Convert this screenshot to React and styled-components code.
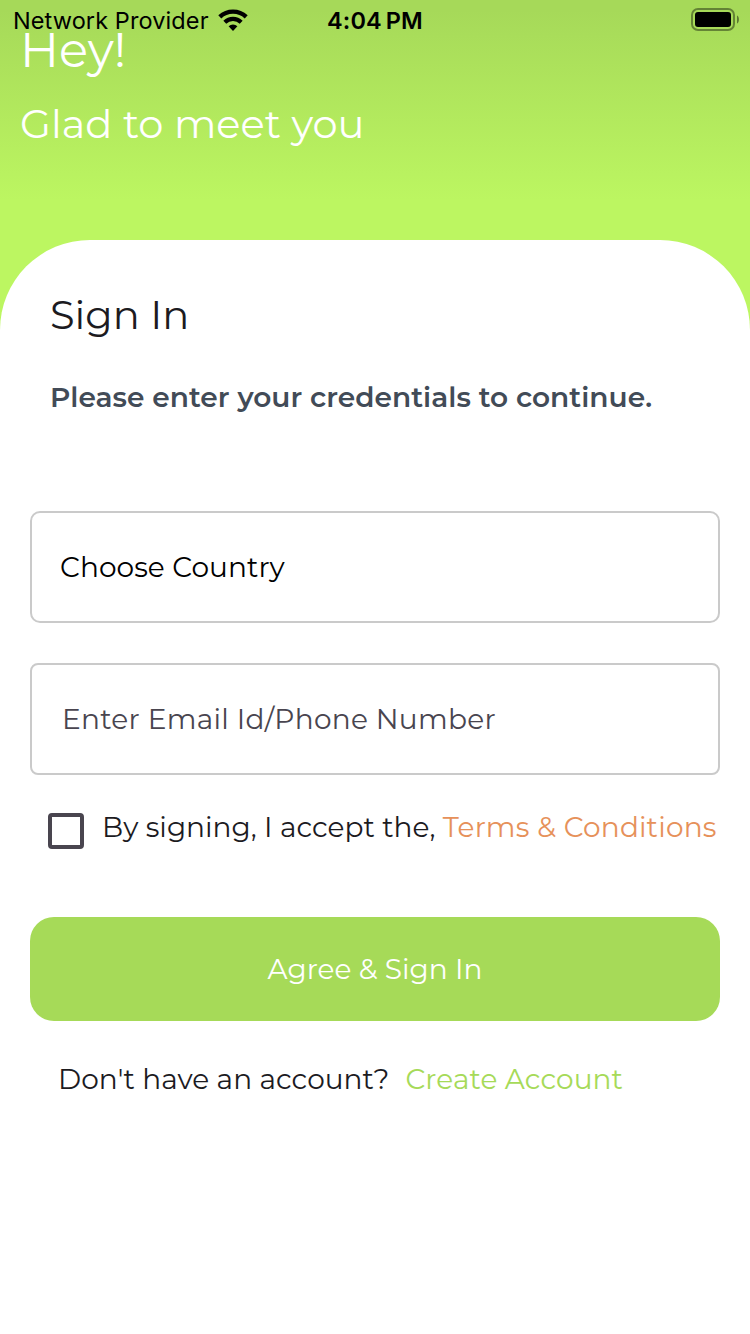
import React from "react";
import styled, { createGlobalStyle } from "styled-components";

const Global = createGlobalStyle`
  * { box-sizing: border-box; }
  body { margin: 0; background: #fff; font-family: Montserrat, Inter, "Liberation Sans", sans-serif; }
`;

const Screen = styled.main`
  width: 750px;
  height: 1334px;
  overflow: hidden;
  display: flex;
  flex-direction: column;
  background: linear-gradient(#a6d959 0, #a6d959 10px, #bcf661 200px);
`;

const StatusBar = styled.header`
  display: grid;
  grid-template-columns: minmax(0, 1fr) auto minmax(0, 1fr);
  align-items: center;
  height: 31px;
  padding: 8px 10px 0;
  line-height: 23px;
`;

const Carrier = styled.div`
  display: flex;
  align-items: center;
  gap: 9px;
  padding-left: 3px;
`;

const Label = styled.span`
  display: block;
  font-size: ${(p) => p.$size || 28}px;
  font-weight: ${(p) => p.$weight || 400};
  letter-spacing: ${(p) => p.$track || 0}px;
  color: ${(p) => p.$color || "#1c1b1f"};
  white-space: pre;
`;

const StatusText = styled(Label)`
  font-family: Inter, sans-serif;
  color: #000;
  margin-top: 1px;
  word-spacing: ${(p) => p.$word || 0}px;
`;

const BatterySlot = styled.div`
  display: flex;
  justify-content: flex-end;
  padding-bottom: 1px;
`;

const Greeting = styled.section`
  display: flex;
  flex-direction: column;
  height: 209px;
  padding-left: 20px;
`;

const HeyLine = styled.div`
  line-height: 38px;
`;

const GladLine = styled.div`
  margin-top: 30px;
  line-height: 50px;
`;

const Sheet = styled.section`
  flex: 1;
  background: #fff;
  border-radius: 90px 90px 0 0;
  padding: 50px 30px 0;
`;

const Title = styled.div`
  line-height: 50px;
  padding-left: 20px;
`;

const Subtitle = styled.div`
  margin-top: 37px;
  line-height: 40px;
  padding-left: 20px;
`;

const Field = styled.div`
  display: flex;
  align-items: center;
  height: 112px;
  margin-top: ${(p) => p.$top}px;
  padding-left: ${(p) => p.$inset}px;
  border: 2px solid #cacaca;
  border-radius: ${(p) => p.$radius}px;
`;

const Terms = styled.div`
  display: flex;
  align-items: flex-start;
  margin-top: 32px;
  padding-left: 18px;
  line-height: 40px;
`;

const Checkbox = styled.div`
  width: 36px;
  height: 36px;
  margin: 6px 18px 0 0;
  border: 4px solid #49454f;
  border-radius: 4px;
`;

const Button = styled.div`
  display: flex;
  align-items: center;
  justify-content: center;
  height: 104px;
  margin-top: 68px;
  border-radius: 24px;
  background: #a6da58;
`;

const SignUp = styled.div`
  display: flex;
  margin-top: 38px;
  padding-left: 28px;
  line-height: 40px;
  gap: 16px;
`;

const Wifi = () => (
  <svg width="30" height="22" viewBox="0 0 30 22" fill="none" stroke="#000">
    <path d="M1.8 7.8A19.4 19.4 0 0 1 28.2 7.8" strokeWidth="4.4" />
    <path d="M6.8 13.2A12 12 0 0 1 23.2 13.2" strokeWidth="4.2" />
    <path d="M15 22L10.6 17.25A6.5 6.5 0 0 1 19.4 17.25Z" fill="#000" stroke="none" />
  </svg>
);

const Battery = () => (
  <svg width="49" height="23" viewBox="0 0 49 23">
    <rect x="1" y="1" width="42" height="21" rx="6" fill="none" stroke="#000" strokeOpacity="0.4" strokeWidth="2" />
    <rect x="4" y="4" width="36" height="15" rx="3" fill="#000" />
    <path d="M46 7.5C48.6 8.6 48.6 14.4 46 15.5Z" fill="#000" fillOpacity="0.45" />
  </svg>
);

export default function App() {
  return (
    <>
      <Global />
      <Screen>
        <StatusBar>
          <Carrier>
            <StatusText $size={23.5} $track={0.1}>Network Provider</StatusText>
            <Wifi />
          </Carrier>
          <StatusText $size={23.5} $weight={600} $word={-2} $track={0.1}>4:04 PM</StatusText>
          <BatterySlot><Battery /></BatterySlot>
        </StatusBar>
        <Greeting>
          <HeyLine><Label $size={48} $color="#fff">Hey!</Label></HeyLine>
          <GladLine><Label $size={40} $color="#fff">Glad to meet you</Label></GladLine>
        </Greeting>
        <Sheet>
          <Title><Label $size={40}>Sign In</Label></Title>
          <Subtitle><Label $weight={600} $track={0.04} $color="#424b57">Please enter your credentials to continue.</Label></Subtitle>
          <Field $top={94} $inset={28} $radius={10}><Label $track={0.06} $color="#000">Choose Country</Label></Field>
          <Field $top={40} $inset={30} $radius={8}><Label $track={0.28} $color="#49454f">Enter Email Id/Phone Number</Label></Field>
          <Terms>
            <Checkbox />
            <Label $track={0.02}>By signing, I accept the, </Label>
            <Label $track={0.2} $color="#e6915a">Terms & Conditions</Label>
          </Terms>
          <Button><Label $color="#fff">Agree & Sign In</Label></Button>
          <SignUp>
            <Label $track={0.04}>Don't have an account?</Label>
            <Label $track={0.08} $color="#a6da58">Create Account</Label>
          </SignUp>
        </Sheet>
      </Screen>
    </>
  );
}
